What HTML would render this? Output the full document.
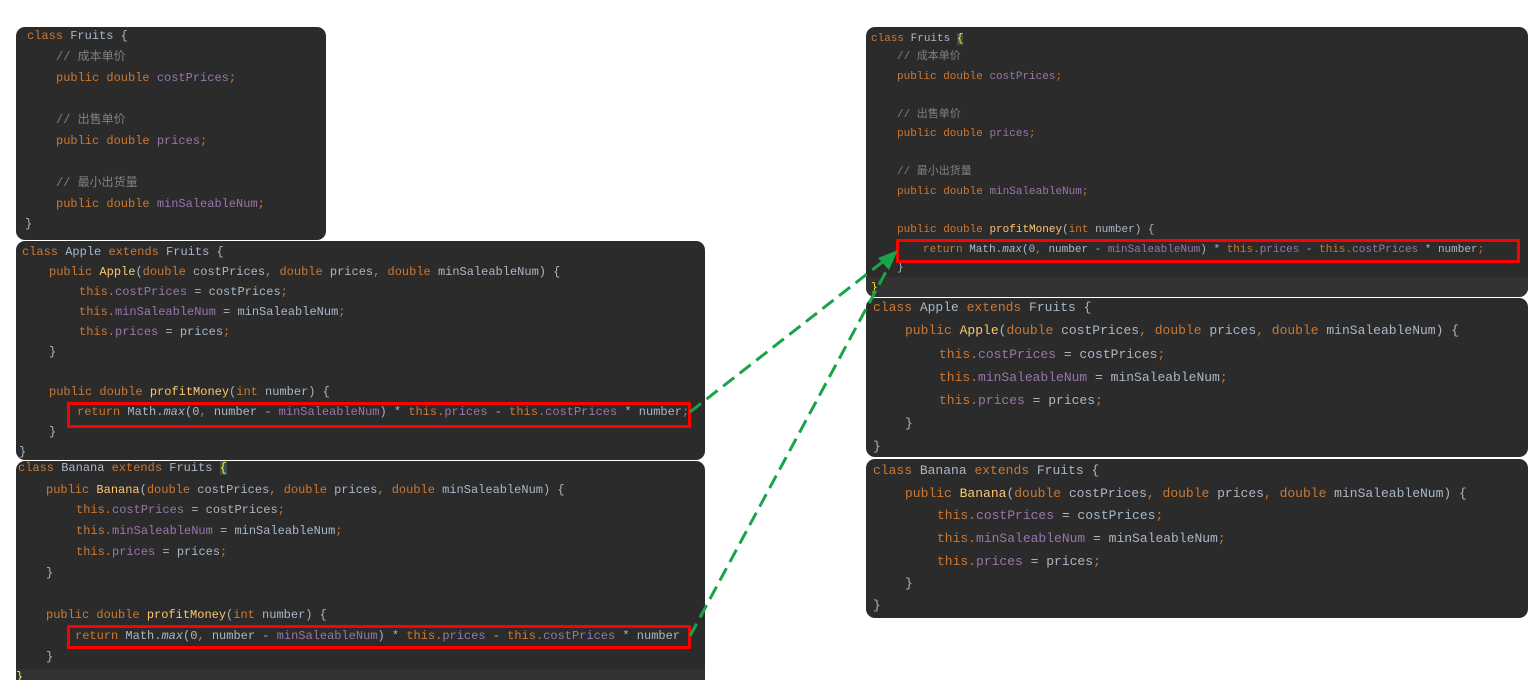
<!DOCTYPE html>
<html><head><meta charset="utf-8">
<style>
html,body{margin:0;padding:0;background:#fff;width:1533px;height:680px;overflow:hidden;position:relative}
.p{position:absolute;background:#2b2b2b;border-radius:9px;overflow:hidden}
.l{position:absolute;white-space:pre;font-family:"Liberation Mono","Noto Sans CJK SC",monospace;color:#a9b7c6;line-height:16px}
.k{color:#cc7832}.f{color:#9876aa}.c{color:#808080}.m{color:#ffc66d}.i{font-style:italic}
.s12 .l{font-size:12px}.s11 .l{font-size:11px}.s13 .l{font-size:13px}
.box{position:absolute;border:3px solid #f00;box-sizing:border-box}
.hl{position:absolute;background:#323232}
</style></head><body>

<!-- Left Fruits -->
<div class="p s12" style="left:16px;top:27px;width:310px;height:213px">
<div class="l" style="left:11px;top:1px"><span class="k">class</span> Fruits {</div>
<div class="l" style="left:40px;top:22px"><span class="c">// 成本单价</span></div>
<div class="l" style="left:40px;top:43px"><span class="k">public double</span> <span class="f">costPrices</span><span class="k">;</span></div>
<div class="l" style="left:40px;top:85px"><span class="c">// 出售单价</span></div>
<div class="l" style="left:40px;top:106px"><span class="k">public double</span> <span class="f">prices</span><span class="k">;</span></div>
<div class="l" style="left:40px;top:148px"><span class="c">// 最小出货量</span></div>
<div class="l" style="left:40px;top:169px"><span class="k">public double</span> <span class="f">minSaleableNum</span><span class="k">;</span></div>
<div class="l" style="left:9px;top:189px">}</div>
</div>

<!-- Left Apple -->
<div class="p s12" style="left:16px;top:241px;width:689px;height:219px">
<div class="l" style="left:6px;top:3px"><span class="k">class</span> Apple <span class="k">extends</span> Fruits {</div>
<div class="l" style="left:33px;top:23px"><span class="k">public</span> <span class="m">Apple</span>(<span class="k">double</span> costPrices<span class="k">,</span> <span class="k">double</span> prices<span class="k">,</span> <span class="k">double</span> minSaleableNum) {</div>
<div class="l" style="left:63px;top:43px"><span class="k">this.</span><span class="f">costPrices</span> = costPrices<span class="k">;</span></div>
<div class="l" style="left:63px;top:63px"><span class="k">this.</span><span class="f">minSaleableNum</span> = minSaleableNum<span class="k">;</span></div>
<div class="l" style="left:63px;top:83px"><span class="k">this.</span><span class="f">prices</span> = prices<span class="k">;</span></div>
<div class="l" style="left:33px;top:103px">}</div>
<div class="l" style="left:33px;top:143px"><span class="k">public double</span> <span class="m">profitMoney</span>(<span class="k">int</span> number) {</div>
<div class="l" style="left:61px;top:163px"><span class="k">return</span> Math.<span class="i">max</span>(0<span class="k">,</span> number - <span class="f">minSaleableNum</span>) * <span class="k">this.</span><span class="f">prices</span> - <span class="k">this.</span><span class="f">costPrices</span> * number<span class="k">;</span></div>
<div class="l" style="left:33px;top:183px">}</div>
<div class="l" style="left:3px;top:203px">}</div>
</div>

<!-- Left Banana -->
<div class="p s12" style="left:16px;top:461px;width:689px;height:230px">
<div class="hl" style="left:0;top:208px;width:689px;height:22px"></div>
<div class="l" style="left:2px;top:-1px"><span class="k">class</span> Banana <span class="k">extends</span> Fruits <span style="color:#ffef28;background:#3b514d">{</span></div>
<div class="l" style="left:30px;top:21px"><span class="k">public</span> <span class="m">Banana</span>(<span class="k">double</span> costPrices<span class="k">,</span> <span class="k">double</span> prices<span class="k">,</span> <span class="k">double</span> minSaleableNum) {</div>
<div class="l" style="left:60px;top:41px"><span class="k">this.</span><span class="f">costPrices</span> = costPrices<span class="k">;</span></div>
<div class="l" style="left:60px;top:62px"><span class="k">this.</span><span class="f">minSaleableNum</span> = minSaleableNum<span class="k">;</span></div>
<div class="l" style="left:60px;top:83px"><span class="k">this.</span><span class="f">prices</span> = prices<span class="k">;</span></div>
<div class="l" style="left:30px;top:104px">}</div>
<div class="l" style="left:30px;top:146px"><span class="k">public double</span> <span class="m">profitMoney</span>(<span class="k">int</span> number) {</div>
<div class="l" style="left:59px;top:167px"><span class="k">return</span> Math.<span class="i">max</span>(0<span class="k">,</span> number - <span class="f">minSaleableNum</span>) * <span class="k">this.</span><span class="f">prices</span> - <span class="k">this.</span><span class="f">costPrices</span> * number</div>
<div class="l" style="left:30px;top:188px">}</div>
<div class="l" style="left:0px;top:208px;color:#ffef28">}</div>
</div>

<!-- Right Fruits -->
<div class="p s11" style="left:866px;top:27px;width:662px;height:270px">
<div class="hl" style="left:0;top:250px;width:662px;height:20px"></div>
<div class="l" style="left:5px;top:4px"><span class="k">class</span> Fruits <span style="color:#ffef28;background:#3b514d">{</span></div>
<div class="l" style="left:31px;top:22px"><span class="c">// 成本单价</span></div>
<div class="l" style="left:31px;top:42px"><span class="k">public double</span> <span class="f">costPrices</span><span class="k">;</span></div>
<div class="l" style="left:31px;top:80px"><span class="c">// 出售单价</span></div>
<div class="l" style="left:31px;top:99px"><span class="k">public double</span> <span class="f">prices</span><span class="k">;</span></div>
<div class="l" style="left:31px;top:137px"><span class="c">// 最小出货量</span></div>
<div class="l" style="left:31px;top:157px"><span class="k">public double</span> <span class="f">minSaleableNum</span><span class="k">;</span></div>
<div class="l" style="left:31px;top:195px"><span class="k">public double</span> <span class="m">profitMoney</span>(<span class="k">int</span> number) {</div>
<div class="l" style="left:57px;top:215px"><span class="k">return</span> Math.<span class="i">max</span>(0<span class="k">,</span> number - <span class="f">minSaleableNum</span>) * <span class="k">this.</span><span class="f">prices</span> - <span class="k">this.</span><span class="f">costPrices</span> * number<span class="k">;</span></div>
<div class="l" style="left:31px;top:233px">}</div>
<div class="l" style="left:5px;top:253px;color:#ffef28">}</div>
</div>

<!-- Right Apple -->
<div class="p s13" style="left:866px;top:298px;width:662px;height:159px">
<div class="l" style="left:7px;top:2px"><span class="k">class</span> Apple <span class="k">extends</span> Fruits {</div>
<div class="l" style="left:39px;top:25px"><span class="k">public</span> <span class="m">Apple</span>(<span class="k">double</span> costPrices<span class="k">,</span> <span class="k">double</span> prices<span class="k">,</span> <span class="k">double</span> minSaleableNum) {</div>
<div class="l" style="left:73px;top:49px"><span class="k">this.</span><span class="f">costPrices</span> = costPrices<span class="k">;</span></div>
<div class="l" style="left:73px;top:72px"><span class="k">this.</span><span class="f">minSaleableNum</span> = minSaleableNum<span class="k">;</span></div>
<div class="l" style="left:73px;top:95px"><span class="k">this.</span><span class="f">prices</span> = prices<span class="k">;</span></div>
<div class="l" style="left:39px;top:118px">}</div>
<div class="l" style="left:7px;top:141px">}</div>
</div>

<!-- Right Banana -->
<div class="p s13" style="left:866px;top:459px;width:662px;height:159px">
<div class="l" style="left:7px;top:4px"><span class="k">class</span> Banana <span class="k">extends</span> Fruits {</div>
<div class="l" style="left:39px;top:27px"><span class="k">public</span> <span class="m">Banana</span>(<span class="k">double</span> costPrices<span class="k">,</span> <span class="k">double</span> prices<span class="k">,</span> <span class="k">double</span> minSaleableNum) {</div>
<div class="l" style="left:71px;top:49px"><span class="k">this.</span><span class="f">costPrices</span> = costPrices<span class="k">;</span></div>
<div class="l" style="left:71px;top:72px"><span class="k">this.</span><span class="f">minSaleableNum</span> = minSaleableNum<span class="k">;</span></div>
<div class="l" style="left:71px;top:95px"><span class="k">this.</span><span class="f">prices</span> = prices<span class="k">;</span></div>
<div class="l" style="left:39px;top:117px">}</div>
<div class="l" style="left:7px;top:139px">}</div>
</div>

<div class="box" style="left:67px;top:402px;width:624px;height:26px"></div>
<div class="box" style="left:67px;top:625px;width:624px;height:24px"></div>
<div class="box" style="left:896px;top:239px;width:624px;height:24px"></div>

<svg width="1533" height="680" style="position:absolute;left:0;top:0">
<g stroke="#1aa34a" stroke-width="3" fill="none" stroke-dasharray="14,7">
<line x1="690" y1="412" x2="885" y2="260"/>
<line x1="690" y1="636" x2="888" y2="268"/>
</g>
<polygon points="898,250 878,258 889,270" fill="#1aa34a"/>
</svg>
</body></html>
